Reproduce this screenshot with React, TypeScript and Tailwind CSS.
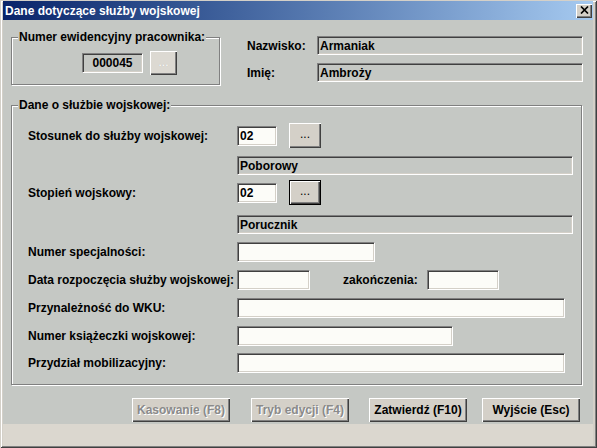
import React from "react";

const font = "font-['Liberation_Sans',Arial,sans-serif] font-bold text-[12px] text-black";

const sunken =
  "border border-t-[#808080] border-l-[#808080] border-b-white border-r-white shadow-[inset_1px_1px_0_#404040,inset_-1px_-1px_0_#d4d0c8]";

const raised =
  "bg-[#d4d0c8] shadow-[inset_1px_1px_0_#fff,inset_-1px_-1px_0_#404040,inset_-2px_-2px_0_#808080]";

function Field({
  width,
  value,
  readOnly,
  height = 20,
}: {
  width: number;
  value?: string;
  readOnly?: boolean;
  height?: number;
}) {
  return (
    <div
      className={`${sunken} flex items-center pl-[2px] leading-none ${
        readOnly ? "bg-[#c5c8c4]" : "bg-[#fcfcf8]"
      }`}
      style={{ width, height }}
    >
      {value}
    </div>
  );
}

function DotsButton({ focused }: { focused?: boolean }) {
  return (
    <div
      className={`flex h-[25px] w-[32px] items-center justify-center pb-[3px] font-normal ${raised} ${
        focused ? "border border-black" : ""
      }`}
    >
      ...
    </div>
  );
}

function GroupBox({
  title,
  className,
  children,
}: {
  title: string;
  className?: string;
  children: React.ReactNode;
}) {
  return (
    <div
      className={`relative border border-[#808080] shadow-[1px_1px_0_#fff,inset_1px_1px_0_#fff] ${className ?? ""}`}
    >
      <span className="absolute -top-[8px] left-[6px] bg-[#c5c8c4] px-[1px] leading-[15px]">
        {title}
      </span>
      {children}
    </div>
  );
}

function Row({
  label,
  children,
  className,
}: {
  label: string;
  children: React.ReactNode;
  className?: string;
}) {
  return (
    <div className={`flex items-center ${className ?? ""}`}>
      <span className="w-[209px] shrink-0">{label}</span>
      {children}
    </div>
  );
}

function DialogButton({
  label,
  disabled,
  className,
}: {
  label: string;
  disabled?: boolean;
  className?: string;
}) {
  return (
    <div
      className={`flex h-[24px] w-[98px] items-center justify-center ${raised} ${
        disabled ? "text-[#8a8a8a] [text-shadow:1px_1px_0_#fff]" : ""
      } ${className ?? ""}`}
    >
      {label}
    </div>
  );
}

export default function App() {
  return (
    <div
      className={`${font} flex h-[448px] w-[597px] flex-col bg-[#d4d0c8] pt-[1px] pl-[3px] pr-[4px] shadow-[inset_1px_1px_0_#d4d0c8,inset_-1px_-1px_0_#404040,inset_2px_2px_0_#fff,inset_-2px_-2px_0_#808080]`}
    >
      {/* title bar */}
      <div className="flex h-[19px] items-center justify-between bg-linear-to-r from-[#0a246a] to-[#a6caf0] pl-[2px] pr-[1px]">
        <span className="text-white">Dane dotyczące służby wojskowej</span>
        <div className={`flex h-[14px] w-[16px] items-center justify-center ${raised}`}>
          <svg width="9" height="8" viewBox="0 0 9 8" className="mb-[1px]">
            <path d="M1 0.5 L8 7.5 M8 0.5 L1 7.5" stroke="#000" strokeWidth="1.7" />
          </svg>
        </div>
      </div>

      {/* body */}
      <div className="flex h-[404px] flex-col bg-[#c5c8c4]">
        <div className="flex h-[65px]">
          <GroupBox title="Numer ewidencyjny pracownika:" className="ml-[8px] mt-[17px] h-[48px] w-[209px]">
            <div className="flex items-center gap-[7px] pl-[70px] pt-[13px]">
              <div className={`${sunken} flex h-[20px] w-[61px] items-center justify-center bg-[#c5c8c4]`}>
                000045
              </div>
              <div
                className={`flex h-[24px] w-[27px] items-center justify-center pb-[3px] font-normal text-white [text-shadow:0_0_1px_#b0b0b0] bg-[#dcd9d2] shadow-[inset_1px_1px_0_#fff,inset_-1px_-1px_0_#404040,inset_-2px_-2px_0_#808080]`}
              >
                ...
              </div>
            </div>
          </GroupBox>
          <div className="ml-[27px] mt-[16px] flex flex-col gap-[8px]">
            <div className="flex h-[19px] items-center">
              <span className="w-[70px]">Nazwisko:</span>
              <Field width={266} height={19} value="Armaniak" readOnly />
            </div>
            <div className="flex h-[19px] items-center">
              <span className="w-[70px]">Imię:</span>
              <Field width={266} height={19} value="Ambroży" readOnly />
            </div>
          </div>
        </div>

        <GroupBox title="Dane o służbie wojskowej:" className="ml-[8px] mt-[20px] h-[280px] w-[571px]">
          <div className="flex flex-col pl-[16px] pt-[17px]">
            <Row label="Stosunek do służby wojskowej:" className="h-[25px]">
              <Field width={40} value="02" />
              <div className="ml-[12px]">
                <DotsButton />
              </div>
            </Row>
            <div className="ml-[209px] mt-[8px]">
              <Field width={336} height={19} value="Poborowy" readOnly />
            </div>
            <Row label="Stopień wojskowy:" className="mt-[5px] h-[25px]">
              <Field width={40} value="02" />
              <div className="ml-[12px]">
                <DotsButton focused />
              </div>
            </Row>
            <div className="ml-[209px] mt-[10px]">
              <Field width={336} height={19} value="Porucznik" readOnly />
            </div>
            <Row label="Numer specjalności:" className="mt-[8px]">
              <Field width={138} />
            </Row>
            <Row label="Data rozpoczęcia służby wojskowej:" className="mt-[8px]">
              <Field width={73} />
              <span className="ml-[33px] w-[84px]">zakończenia:</span>
              <Field width={72} />
            </Row>
            <Row label="Przynależność do WKU:" className="mt-[8px]">
              <Field width={328} />
            </Row>
            <Row label="Numer książeczki wojskowej:" className="mt-[8px]">
              <Field width={216} />
            </Row>
            <Row label="Przydział mobilizacyjny:" className="mt-[7px]">
              <Field width={328} />
            </Row>
          </div>
        </GroupBox>

        <div className="mt-[13px] flex">
          <DialogButton label="Kasowanie (F8)" disabled className="ml-[129px]" />
          <DialogButton label="Tryb edycji (F4)" disabled className="ml-[21px]" />
          <DialogButton label="Zatwierdź (F10)" className="ml-[20px]" />
          <DialogButton label="Wyjście (Esc)" className="ml-[15px]" />
        </div>
      </div>

      {/* status strip */}
      <div className="h-[22px] bg-[#dbd7cf]" />
    </div>
  );
}
